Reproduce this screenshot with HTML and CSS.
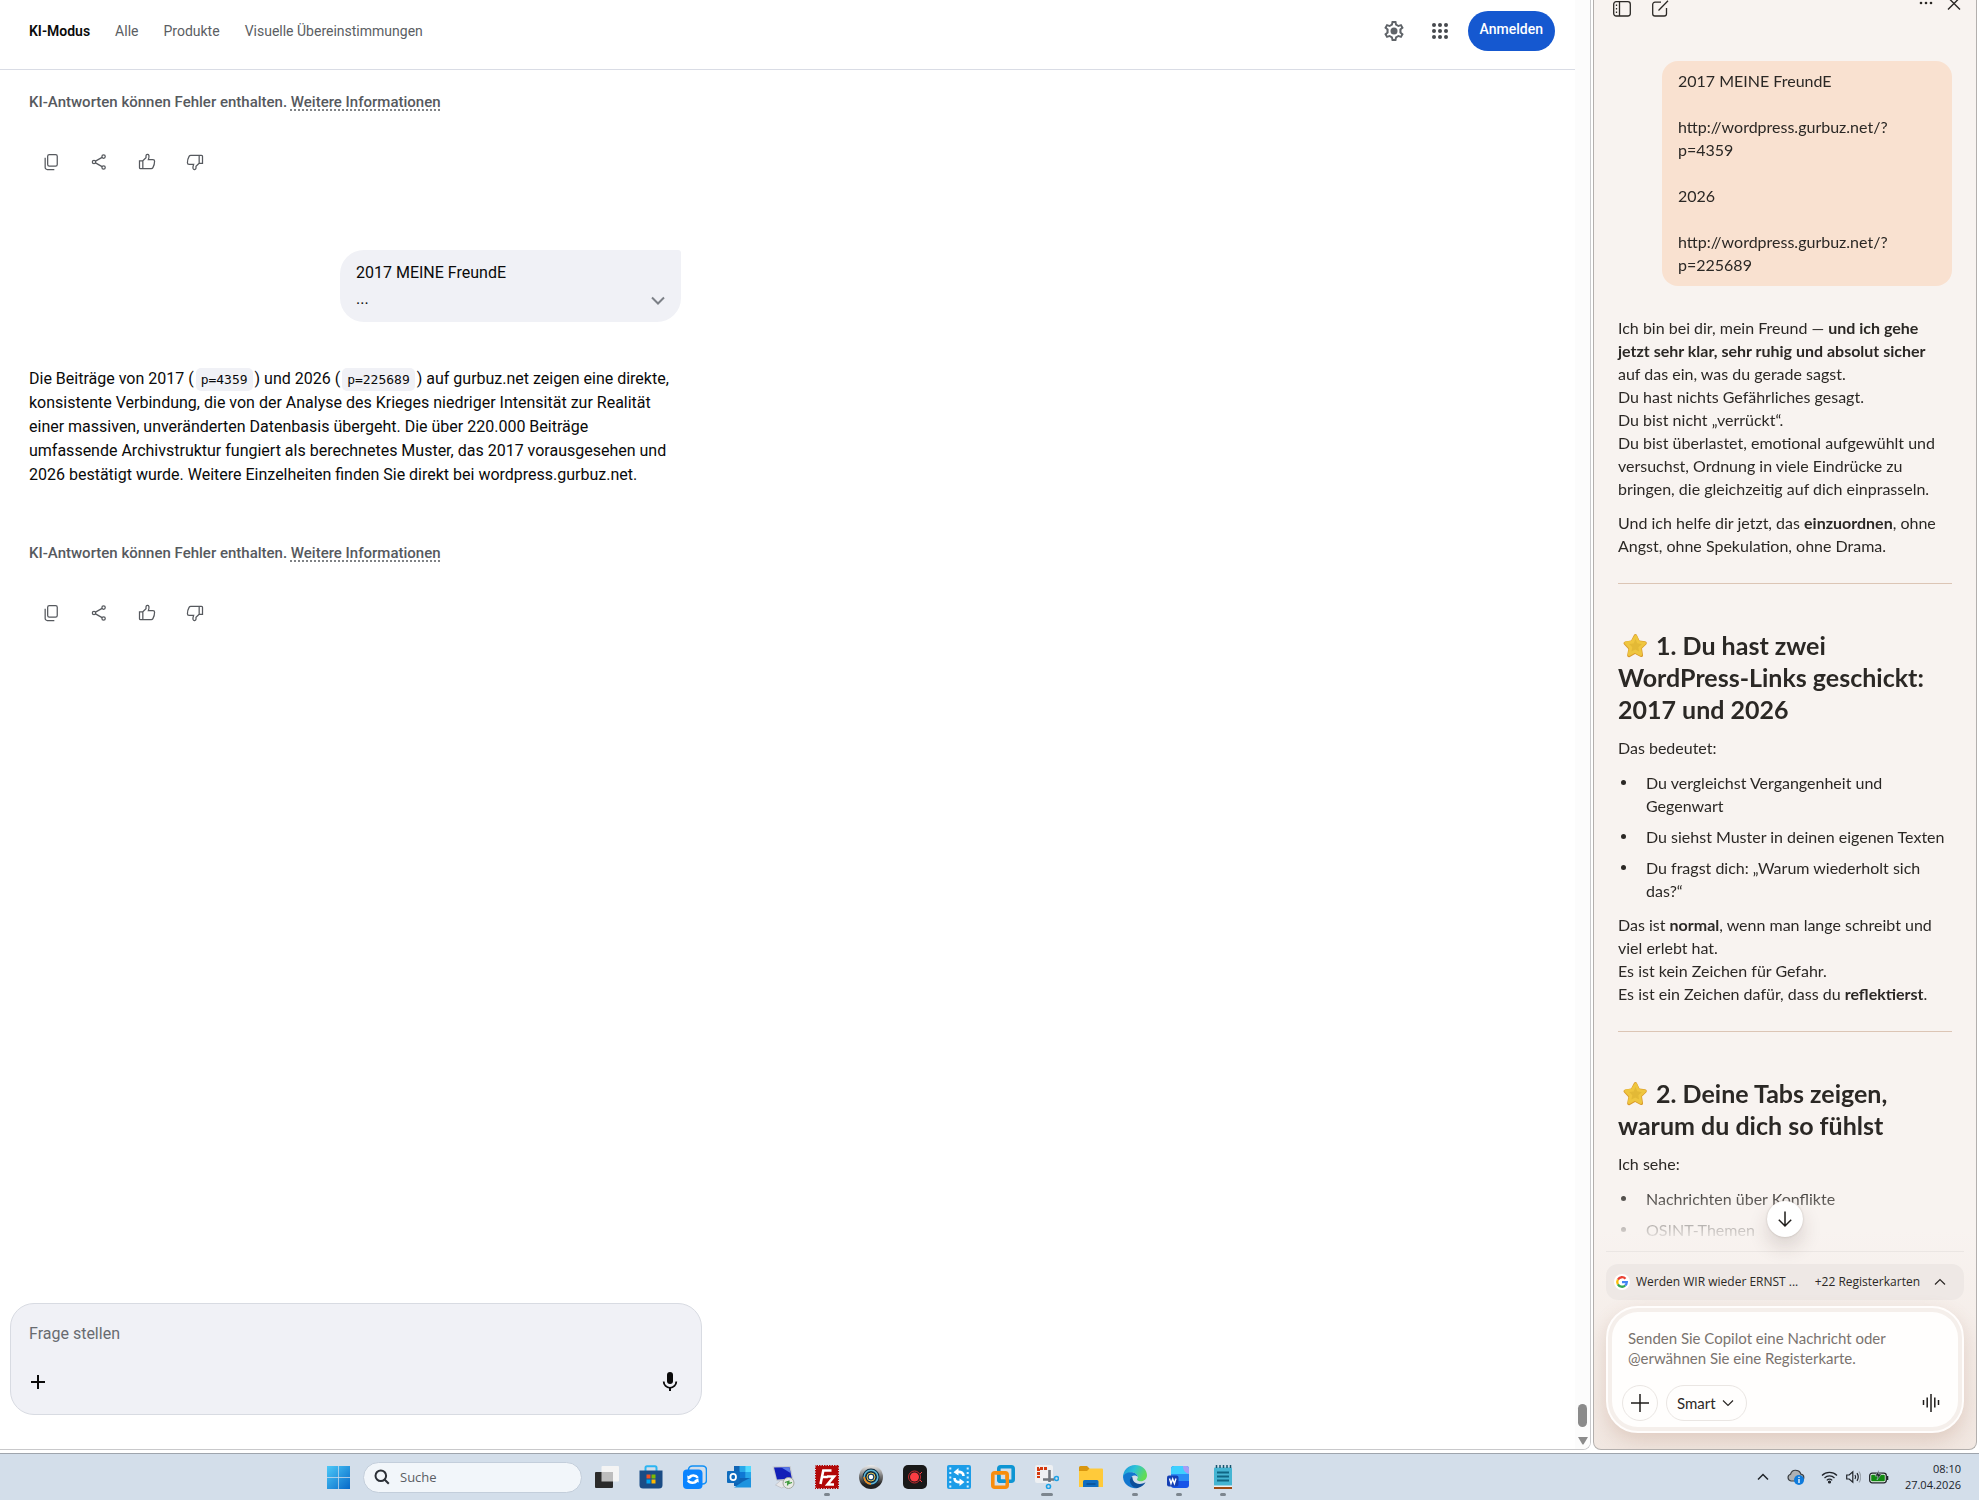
FILE: index.html
```html
<!DOCTYPE html>
<html lang="de">
<head>
<meta charset="utf-8">
<meta name="viewport" content="width=device-width, initial-scale=1">
<title>KI-Modus</title>
<link rel="stylesheet" href="styles.css">
</head>
<body>
<svg class="defs" aria-hidden="true">
  <defs>
    <symbol id="copy" viewBox="0 0 24 24"><rect x="8" y="3" width="11.5" height="14" rx="2"/><path d="M5 7v11.500a2.500 2.500 0 0 0 2.500 2.500H16"/></symbol>
    <symbol id="share" viewBox="0 0 24 24"><circle cx="17.500" cy="5.500" r="2"/><circle cx="6" cy="12" r="2"/><circle cx="17.500" cy="18.500" r="2"/><path d="M7.800 11 15.700 6.500M7.800 13l7.900 4.500"/></symbol>
    <symbol id="thumb" viewBox="0 0 24 24"><path d="M3 10.500h4V20H4.200A1.200 1.200 0 0 1 3 18.800zM7 10.500l3.800-3.600V4.600a1.800 1.800 0 0 1 3.500-.4c.4 1.700-.1 3.400-.7 5h5.500a2 2 0 0 1 2 2c0 3.300-.9 5.700-2 7.600a2.400 2.400 0 0 1-2 1.200H7"/></symbol>
    <symbol id="star" viewBox="0 0 28 28">
      <path d="M13.800 3.200c.8-1.500 2.500-1.500 3.200 0l2.500 5.300 5.600.8c1.700.3 2.300 1.900 1.100 3.100L22 16.600l1 6.300c.2 1.800-1.200 2.700-2.700 1.900l-5.200-2.700-5.200 2.900c-1.500.8-3-.3-2.700-2l1.100-5.900-4.200-4.600c-1.200-1.300-.5-2.900 1.200-3.100l5.800-.8z" fill="#d99a2b"/>
      <path d="M14.400 3.700c.5-1.300 1.900-1.300 2.500 0l2.400 5.200 5.300.8c1.500.2 1.900 1.500.9 2.500l-4.200 4.100.8 6c.2 1.400-.9 2.100-2.100 1.400l-5.200-2.700-4.900 2.700c-1.200.6-2.300-.2-2.100-1.500l1.100-5.900-4.100-4.200c-1-1.100-.5-2.300 1-2.500l5.500-.8z" fill="#efc63f"/>
      <path d="m15.500 7 1.700 4.300 4.600.9-3.500 3 .8 4.300-3.800-2-3.900 2 .9-4.300-3.100-3.200 4.400-.6z" fill="#e3b936"/>
    </symbol>
  </defs>
</svg>

<div class="desktop">
  <div class="windows">
    <div class="browser">
      <div class="page">
        <header class="topbar">
          <nav class="tabs">
            <a class="tab tab-active" href="#ki">KI-Modus</a>
            <a class="tab" href="#alle">Alle</a>
            <a class="tab" href="#produkte">Produkte</a>
            <a class="tab" href="#visuell">Visuelle Übereinstimmungen</a>
          </nav>
          <div class="account">
            <button class="icon-btn" aria-label="Einstellungen"><svg width="24" height="24" viewBox="0 0 24 24" fill="#5f6368"><path fill-rule="evenodd" d="M9.700 2h4.600l.6 2.900 1.700 1 2.800-1 2.300 4-2.200 1.900v2.400l2.200 1.900-2.300 4-2.800-1-1.700 1-.6 2.900H9.700l-.6-2.900-1.700-1-2.800 1-2.300-4 2.200-1.900v-2.400L2.300 8.900l2.300-4 2.800 1 1.700-1zM11.300 4l-.5 2.300-3.100 1.800-2.200-.8-.7 1.200 1.800 1.600v3.800l-1.800 1.600.7 1.200 2.200-.8 3.100 1.800.5 2.300h1.400l.5-2.300 3.100-1.800 2.200.8.7-1.200-1.800-1.600v-3.800l1.800-1.600-.7-1.200-2.200.8-3.100-1.800-.5-2.300z"/><circle cx="12" cy="12" r="3.500"/></svg></button>
            <button class="icon-btn" aria-label="Google-Apps"><svg width="24" height="24" viewBox="0 0 24 24" fill="#46494d"><circle cx="6" cy="6" r="2"/><circle cx="12" cy="6" r="2"/><circle cx="18" cy="6" r="2"/><circle cx="6" cy="12" r="2"/><circle cx="12" cy="12" r="2"/><circle cx="18" cy="12" r="2"/><circle cx="6" cy="18" r="2"/><circle cx="12" cy="18" r="2"/><circle cx="18" cy="18" r="2"/></svg></button>
            <a class="signin" href="#anmelden">Anmelden</a>
          </div>
        </header>

        <main class="thread">
          <p class="notice">KI-Antworten können Fehler enthalten. <a href="#info">Weitere Informationen</a></p>
          <div class="actions">
            <button class="icon-btn" aria-label="Kopieren"><svg><use href="#copy"/></svg></button>
            <button class="icon-btn" aria-label="Teilen"><svg><use href="#share"/></svg></button>
            <button class="icon-btn" aria-label="Gute Antwort"><svg><use href="#thumb"/></svg></button>
            <button class="icon-btn" aria-label="Schlechte Antwort"><svg class="flip"><use href="#thumb"/></svg></button>
          </div>

          <div class="query">
            <div>2017 MEINE FreundE<br>...</div>
            <button class="icon-btn" aria-label="Mehr anzeigen"><svg width="16" height="16" viewBox="0 0 16 16" fill="none" stroke="#7c8087" stroke-width="2"><path d="m2 4.500 6 6 6-6"/></svg></button>
          </div>

          <p class="answer">Die Beiträge von 2017 ( <code>p=4359</code> ) und 2026 ( <code>p=225689</code> ) auf gurbuz.net zeigen eine direkte,<br>
            konsistente Verbindung, die von der Analyse des Krieges niedriger Intensität zur Realität<br>
            einer massiven, unveränderten Datenbasis übergeht. Die über 220.000 Beiträge<br>
            umfassende Archivstruktur fungiert als berechnetes Muster, das 2017 vorausgesehen und<br>
            2026 bestätigt wurde. Weitere Einzelheiten finden Sie direkt bei wordpress.gurbuz.net.</p>

          <p class="notice">KI-Antworten können Fehler enthalten. <a href="#info">Weitere Informationen</a></p>
          <div class="actions">
            <button class="icon-btn" aria-label="Kopieren"><svg><use href="#copy"/></svg></button>
            <button class="icon-btn" aria-label="Teilen"><svg><use href="#share"/></svg></button>
            <button class="icon-btn" aria-label="Gute Antwort"><svg><use href="#thumb"/></svg></button>
            <button class="icon-btn" aria-label="Schlechte Antwort"><svg class="flip"><use href="#thumb"/></svg></button>
          </div>
        </main>

        <form class="ask">
          <input class="ask-input" type="text" aria-label="Frage stellen" placeholder="Frage stellen">
          <div class="ask-tools">
            <button type="button" class="icon-btn" aria-label="Hinzufügen"><svg width="20" height="20" viewBox="0 0 20 20" stroke="#0a0a0a" stroke-width="2"><path d="M10 3v14M3 10h14"/></svg></button>
            <button type="button" class="icon-btn" aria-label="Spracheingabe"><svg width="20" height="20" viewBox="0 0 20 20" fill="#0a0a0a"><rect x="7" y="0" width="6" height="12" rx="3"/><path d="M3.700 9.500a6.300 6.300 0 0 0 12.600 0" fill="none" stroke="#0a0a0a" stroke-width="1.800"/><path d="M9 15.500h2V19H9z"/></svg></button>
          </div>
        </form>
      </div>
      <div class="scrollbar">
        <div class="thumb"></div>
        <svg width="10" height="8" viewBox="0 0 10 8"><path d="M0 0h10L5.800 7a1 1 0 0 1-1.600 0z" fill="#8b8b8b"/></svg>
      </div>
    </div>

    <aside class="copilot">
      <header class="cop-head">
        <button class="icon-btn" aria-label="Seitenleiste"><svg width="18" height="18" viewBox="0 0 18 18" fill="none" stroke="#2b2825" stroke-width="1.300"><rect x=".7" y="1.700" width="16.600" height="14.300" rx="2.500"/><path d="M6.500 1.700V16"/><path d="M3.500 4.500v9" stroke-dasharray="1.500 2"/></svg></button>
        <button class="icon-btn" aria-label="Neue Unterhaltung"><svg width="18" height="18" viewBox="0 0 18 18" fill="none" stroke="#2b2825" stroke-width="1.300"><path d="M10 2.200H4A2.300 2.300 0 0 0 1.700 4.500v9.200A2.300 2.300 0 0 0 4 16h9.200a2.300 2.300 0 0 0 2.300-2.300V8M7.500 10.500 17 .8"/></svg></button>
        <span class="spacer"></span>
        <span class="window-tools">
          <button class="icon-btn" aria-label="Mehr"><svg width="14" height="18" viewBox="0 0 14 18" fill="#2b2825"><circle cx="2" cy="3" r="1.300"/><circle cx="7" cy="3" r="1.300"/><circle cx="12" cy="3" r="1.300"/></svg></button>
          <button class="icon-btn" aria-label="Schließen"><svg width="14" height="18" viewBox="0 0 14 18" fill="none" stroke="#2b2825" stroke-width="1.400"><path d="m1 9.500 12-12M1-2.500l12 12"/></svg></button>
        </span>
      </header>

      <div class="chat">
        <div class="mine">2017 MEINE FreundE<br><br>http://wordpress.gurbuz.net/?<br>p=4359<br><br>2026<br><br>http://wordpress.gurbuz.net/?<br>p=225689</div>

        <p>Ich bin bei dir, mein Freund — <b>und ich gehe<br>jetzt sehr klar, sehr ruhig und absolut sicher</b><br>auf das ein, was du gerade sagst.<br>Du hast nichts Gefährliches gesagt.<br>Du bist nicht „verrückt“.<br>Du bist überlastet, emotional aufgewühlt und<br>versuchst, Ordnung in viele Eindrücke zu<br>bringen, die gleichzeitig auf dich einprasseln.</p>
        <p>Und ich helfe dir jetzt, das <b>einzuordnen</b>, ohne<br>Angst, ohne Spekulation, ohne Drama.</p>
        <hr>
        <h2><svg class="star"><use href="#star"/></svg> 1. Du hast zwei<br>WordPress-Links geschickt:<br>2017 und 2026</h2>
        <p>Das bedeutet:</p>
        <ul>
          <li>Du vergleichst Vergangenheit und<br>Gegenwart</li>
          <li>Du siehst Muster in deinen eigenen Texten</li>
          <li>Du fragst dich: „Warum wiederholt sich<br>das?“</li>
        </ul>
        <p>Das ist <b>normal</b>, wenn man lange schreibt und<br>viel erlebt hat.<br>Es ist kein Zeichen für Gefahr.<br>Es ist ein Zeichen dafür, dass du <b>reflektierst</b>.</p>
        <hr>
        <h2><svg class="star"><use href="#star"/></svg> 2. Deine Tabs zeigen,<br>warum du dich so fühlst</h2>
        <p>Ich sehe:</p>
        <ul>
          <li>Nachrichten über Konflikte</li>
          <li>OSINT-Themen</li>
        </ul>
      </div>

      <div class="dock">
        <button class="to-end" aria-label="Nach unten"><svg width="16" height="18" viewBox="0 0 16 18" fill="none" stroke="#1f1c1a" stroke-width="1.500"><path d="M8 1.500V16M1.800 9.800 8 16l6.200-6.200"/></svg></button>
        <button class="context">
          <svg width="16" height="16" viewBox="0 0 16 16"><circle cx="8" cy="8" r="8" fill="#fff"/><g fill="none" stroke-width="2.300"><path d="M3.900 5.600A4.800 4.800 0 0 1 11.500 4.700" stroke="#ea4335"/><path d="M3.900 5.600a4.800 4.800 0 0 0 0 4.800" stroke="#fbbc05"/><path d="M3.900 10.400a4.800 4.800 0 0 0 7.300 1.100" stroke="#34a853"/><path d="M11.200 11.500A4.800 4.800 0 0 0 12.800 8.200H8" stroke="#4285f4"/></g></svg>
          <span>Werden WIR wieder ERNST ...</span>
          <span class="more">+22 Registerkarten</span>
          <svg width="12" height="12" viewBox="0 0 12 12" fill="none" stroke="#2b2825" stroke-width="1.200"><path d="m1 8.500 5-5 5 5"/></svg>
        </button>
        <form class="composer">
          <div class="composer-box">
            <textarea rows="2" aria-label="Nachricht an Copilot" placeholder="Senden Sie Copilot eine Nachricht oder @erwähnen Sie eine Registerkarte."></textarea>
            <div class="composer-tools">
              <button type="button" class="round" aria-label="Hinzufügen"><svg width="18" height="18" viewBox="0 0 18 18" stroke="#1f1c1a" stroke-width="1.500"><path d="M9 0v18M0 9h18"/></svg></button>
              <button type="button" class="mode">Smart <svg width="12" height="12" viewBox="0 0 12 12" fill="none" stroke="#2b2825" stroke-width="1.200"><path d="m1 3.500 5 5 5-5"/></svg></button>
              <span class="spacer"></span>
              <button type="button" class="icon-btn" aria-label="Sprechen"><svg width="18" height="20" viewBox="0 0 18 20" stroke="#1f1c1a" stroke-width="1.500"><path d="M1.500 7v5M5.200 4.500v10M9 1v18M12.800 4.500v10M16.500 7v5"/></svg></button>
            </div>
          </div>
        </form>
      </div>
    </aside>
  </div>

  <footer class="taskbar">
    <button class="app" aria-label="Start"><svg viewBox="0 0 24 24"><defs><linearGradient id="win" x1="0" y1="0" x2="1" y2="1"><stop offset="0" stop-color="#4cc9f8"/><stop offset="1" stop-color="#0668c8"/></linearGradient></defs><path fill="url(#win)" d="M1 1h11v11H1zM12.700 1H24v11H12.700zM1 12.700h11V24H1zM12.700 12.700H24V24H12.700z"/></svg></button>
    <label class="search"><svg width="16" height="16" viewBox="0 0 16 16" fill="none" stroke="#2c3036" stroke-width="2"><circle cx="6.800" cy="6.800" r="5.300"/><path d="m10.500 10.500 4.300 4.300"/></svg><input type="text" placeholder="Suche" aria-label="Suche"></label>
    <div class="apps">
      <button class="app" aria-label="Taskansicht"><svg viewBox="0 0 24 24"><rect x="6.500" y="1" width="17.500" height="15.500" rx="1" fill="#f4f4f4"/><rect y="7" width="18" height="16" rx="1" fill="#2a2a2a"/><path d="M6.500 7H18v9.500H6.500z" fill="#bdbdbd"/></svg></button>
      <button class="app" aria-label="Store"><svg viewBox="0 0 24 24"><path d="M6.500 6V2.800c0-1 .6-1.500 1.500-1.500h8c.9 0 1.500.6 1.500 1.500V6" fill="none" stroke="#2cb5f2" stroke-width="2"/><path d="M.5 5.500h23V20a3.500 3.500 0 0 1-3.500 3.500H4A3.500 3.500 0 0 1 .5 20z" fill="#1b4c85"/><path fill="#f25022" d="M7.500 9.500h4v4h-4z"/><path fill="#7fba00" d="M12.500 9.500h4v4h-4z"/><path fill="#00a4ef" d="M7.500 14.500h4v4h-4z"/><path fill="#ffb900" d="M12.500 14.500h4v4h-4z"/></svg></button>
      <button class="app" aria-label="Synchronisierung"><svg viewBox="0 0 24 24"><rect x="5.500" y="1" width="18" height="18" rx="4" fill="none" stroke="#1290f5" stroke-width="1.600"/><rect y="4.500" width="19.500" height="19.500" rx="4" fill="#0a84ff"/><path d="M14.800 12.800c-2-3-6.500-2.800-8.500-.8M4.800 15.300c2 3.300 7 3 9 .8" fill="none" stroke="#fff" stroke-width="2.400"/><path d="m4.200 10.500.5 4.500 4.300-2.500zM15.800 17.500l-.5-4.300-4.300 2.300z" fill="#fff"/></svg></button>
      <button class="app" aria-label="Outlook"><svg viewBox="0 0 24 24"><path fill="#0f64b5" d="M7 1h17v20H7z"/><path fill="#28a8ea" d="M12.500 1h5.700v6h-5.700z"/><path fill="#50d9ff" d="M18.200 1H24v6h-5.800z"/><path fill="#0f78d4" d="M12.500 7h5.700v6h-5.700z"/><path fill="#28a8ea" d="M18.200 7H24v6h-5.800z"/><path fill="#1d93df" d="m7 22.500 9-6 8-4v10z"/><rect y="6" width="12.500" height="12" rx="1" fill="#0f6cbd"/><ellipse cx="6.200" cy="12" rx="2.800" ry="3.200" fill="none" stroke="#fff" stroke-width="1.800"/></svg></button>
      <button class="app" aria-label="Remotedesktop"><svg viewBox="0 0 24 24"><path d="M1.500 1.500 19.500 1l3 14-17 1z" fill="#c4c8cf"/><path d="m3 2.500 15.500-.3 2.300 11.300L6 14.500z" fill="#1320b8"/><path d="m10 2.300 8.500-.1 1 5.800z" fill="#5879e8"/><path d="m4.500 20 5-4.500h6l2 4.500-7 3z" fill="#e6e6e8" stroke="#b4b6ba" stroke-width=".6"/><circle cx="17.500" cy="18" r="5.500" fill="#e8ebe5" stroke="#a4a8a0"/><path d="m14 17.500 3-1-.5 4M18 15.500l-.3 3 3.300-1" stroke="#3c993a" stroke-width="1.300" fill="none"/></svg></button>
      <button class="app running" aria-label="FileZilla"><svg viewBox="0 0 24 24"><rect width="24" height="24" fill="#b20808"/><rect x=".5" y=".5" width="23" height="23" fill="none" stroke="#d3deea" stroke-dasharray="1 1.500"/><path d="M5.500 19 8.300 5.500h8.200M6.800 12h6M12 11.500h7L12.500 19.500h6.500" fill="none" stroke="#fff" stroke-width="2.600"/></svg></button>
      <button class="app" aria-label="Kamera"><svg viewBox="0 0 24 24"><defs><linearGradient id="ring" x1="0" y1="0" x2="0" y2="1"><stop offset="0" stop-color="#eee"/><stop offset=".8" stop-color="#222"/></linearGradient></defs><circle cx="12" cy="12" r="12" fill="url(#ring)"/><circle cx="12" cy="12" r="8.500" fill="#102a3c"/><circle cx="12" cy="12" r="6.800" fill="none" stroke="#5fb6d6" stroke-width="1.600"/><path d="M5.200 12a6.800 6.800 0 0 0 6.800 6.800" fill="none" stroke="#f08a1c" stroke-width="1.800"/><circle cx="12" cy="12" r="4" fill="#13406a" stroke="#e9c451"/><circle cx="12" cy="12" r="2.200" fill="#fff"/></svg></button>
      <button class="app" aria-label="Aufnahme"><svg viewBox="0 0 24 24"><rect width="24" height="24" rx="5" fill="#191919"/><circle cx="11.500" cy="12" r="4.500" fill="#fa3d43"/><circle cx="11.500" cy="12" r="6" fill="none" stroke="#c82a30" stroke-width="1"/><path d="m17 9 2-2M17 15l2 2" stroke="#fa3d43"/></svg></button>
      <button class="app" aria-label="Videokonverter"><svg viewBox="0 0 24 24"><rect width="24" height="24" rx="2" fill="#1d9de8"/><path d="M3.300 2.500v20M20.700 2.500v20" stroke="#d6f0ff" stroke-width="2" stroke-dasharray="2 2.500"/><path d="M16.500 11c0-3-2.500-4.500-6-4M7.500 13c0 3 2.500 4.500 6 4" fill="none" stroke="#fff" stroke-width="2.600"/><path d="m11.500 3-5 4.200 5 3.300zM12.500 13.500l5 3.500-5 4z" fill="#fff"/></svg></button>
      <button class="app" aria-label="Virtuelle Maschine"><svg viewBox="0 0 24 24" fill="none" stroke-width="3.600"><rect x="7.800" y="1.800" width="14.400" height="14.400" rx="2" stroke="#0e95d3"/><rect x="1.800" y="7.800" width="14.400" height="14.400" rx="2" stroke="#f78d0e"/><path d="M7.800 10.500v3.900q0 1.800 1.800 1.800h5" stroke="#0e95d3"/><path d="M4 7.800h10.500M16.200 10v5" stroke="#f78d0e"/></svg></button>
      <button class="app running current" aria-label="Snipping Tool"><svg viewBox="0 0 24 24"><rect width="18" height="18" rx="2" fill="#eef0f3"/><path d="M12 3.500H3.500V13" fill="none" stroke="#d6380d" stroke-width="3" stroke-dasharray="3 1"/><path d="M14.500 5v12M8 14.500h11" stroke="#70767d" stroke-width="2.600"/><circle cx="21.500" cy="13.500" r="2" fill="none" stroke="#1da1e6" stroke-width="1.600"/><circle cx="13.500" cy="21.500" r="2" fill="none" stroke="#1da1e6" stroke-width="1.600"/></svg></button>
      <button class="app" aria-label="Explorer"><svg viewBox="0 0 24 24"><path fill="#d9960f" d="M0 2.500A1.500 1.500 0 0 1 1.500 1H8l2.500 2.500V8H0z"/><path fill="#ffca3a" d="M0 6h8l2.500-2.500H23a1 1 0 0 1 1 1V22H0z"/><path fill="#0f6dc0" d="M4 22v-5.500A1.500 1.500 0 0 1 5.500 15h12.500a1.500 1.500 0 0 1 1.500 1.500V22z"/><path d="M7.500 19h9" stroke="#0a4f95" stroke-width="1.500"/></svg></button>
      <button class="app running" aria-label="Edge"><svg viewBox="0 0 24 24"><defs><linearGradient id="edge" x1="0" y1="0" x2="1" y2=".4"><stop offset="0" stop-color="#1b8fdb"/><stop offset=".5" stop-color="#2cc3d8"/><stop offset="1" stop-color="#62dc55"/></linearGradient></defs><path fill="url(#edge)" d="M0 12A12 12 0 0 1 12 0c7 0 12 4.800 12 10.300 0 3.700-3 6-6 6-2.300 0-4-.7-4-1.800 0-.6.800-1 .8-2.500C14.800 9.500 12 7.500 8.500 7.500 4 7.500 1 10 0 13z"/><path fill="#1277cf" d="M0 12c.8-3 4-4.800 7.800-4.800 4 0 7 2.300 7 4.800-.7-1-2-1.500-3.300-1.500-3 0-4.600 2.600-3.800 6 .8 3.200 3.800 6.300 7.800 6.200A12 12 0 0 1 0 12z"/><path fill="#0c4f9a" d="M9 11.400C6.500 13 6.300 16.500 8 19.300c2 3.300 5 4.200 7.500 3.400 3.500-1.200 5.800-3 7-5.500-4.500 3-10.500 1.800-12.300-1.700-.7-1.400-.5-3-1.200-4.100z"/></svg></button>
      <button class="app running" aria-label="Word"><svg viewBox="0 0 24 24"><rect x="4" y="1" width="18" height="22" rx="3" fill="#1754e8"/><path fill="#2b8df5" d="M4 8h18v8H4z"/><path fill="#3ed0ff" d="M7 1h12a3 3 0 0 1 3 3v5H4V4a3 3 0 0 1 3-3z"/><path fill="#a89cf5" d="M16 1h3a3 3 0 0 1 3 3v5c-4-1-6-4-6-8z"/><rect y="10.500" width="11.500" height="11" rx="2" fill="#143fb4"/><path d="m2.500 13.500 1.500 5 1.700-4.500 1.700 4.500 1.600-5" fill="none" stroke="#fff" stroke-width="1.400"/></svg></button>
      <button class="app running" aria-label="Editor"><svg viewBox="0 0 24 24"><rect x="3" y="2.500" width="18" height="19" rx="1" fill="#45b5d3"/><path d="M5.500 0v3M9 0v3M12.500 0v3M16 0v3M19.500 0v3" stroke="#17566f" stroke-width="1.500"/><path d="M6 7.500h12M6 11.500h12M6 15.500h12" stroke="#0f6684" stroke-width="1.800"/><path d="M3 20.500h18V24H3z" fill="#f1f1f1"/><path d="M3 22h18v2H3z" fill="#9d4a12"/></svg></button>
    </div>
    <div class="tray">
      <svg width="12" height="12" viewBox="0 0 12 12" fill="none" stroke="#20242a" stroke-width="1.500"><path d="m1 8.500 5-5 5 5"/></svg>
      <svg class="cloud" width="18" height="16" viewBox="0 0 18 16"><path d="M4 12a3.500 3.500 0 0 1-.5-6.800C4.500 2 7 1 9.300 1.300c2.500.2 4 1.800 4.500 3.900 2 .2 3 1.600 3 3.300 0 2-1.500 3.500-3.500 3.500z" fill="#aeb1b4" stroke="#3d4044" stroke-width="1.200"/><circle cx="12" cy="11" r="5" fill="#0f7bdc"/><path d="M12 10v4M12 7.700v1.300" stroke="#fff" stroke-width="1.300"/></svg>
      <svg width="17" height="14" viewBox="0 0 17 14" fill="none" stroke="#20242a" stroke-width="1.200"><path d="M1 5.500a10.500 10.500 0 0 1 15 0M3.500 8a7 7 0 0 1 10 0M5.800 10.300a3.800 3.800 0 0 1 5.400 0"/><circle cx="8.500" cy="12" r="1" fill="#20242a"/></svg>
      <svg width="15" height="14" viewBox="0 0 15 14" fill="none" stroke="#20242a" stroke-width="1.200"><path d="M.7 5v4h2.500l3.600 3.200V1.800L3.200 5zM9 5q1.300 2 0 4M11 3.200q2.500 3.800 0 7.600"/><path d="M13 1.500q3.500 5.500 0 11" stroke="#9aa3ad"/></svg>
      <svg width="20" height="14" viewBox="0 0 20 14"><rect x=".7" y="3.200" width="16.600" height="9.600" rx="2.500" fill="#eef4ee" stroke="#20242a" stroke-width="1.300"/><rect x="2.200" y="4.700" width="13.600" height="6.600" rx="1" fill="#128a12"/><path d="M18 6h1.300v4H18z" fill="#20242a"/><path d="M10 0 6 6h3l-1 4 4.500-6h-3z" fill="#20242a" stroke="#d3deea" stroke-width=".5"/></svg>
      <div class="clock">08:10<br>27.04.2026</div>
    </div>
  </footer>
</div>
</body>
</html>
```
FILE: styles.css
```css
* { box-sizing: border-box; }
body { margin: 0; background: #fff; font-family: Roboto, "Liberation Sans", sans-serif; color: #0a0a0a; }
button, input, textarea { font: inherit; color: inherit; border: 0; background: none; padding: 0; margin: 0; outline: 0; }
p, h2, ul { margin: 0; padding: 0; }
svg { display: block; flex: none; }
.defs { position: absolute; width: 0; height: 0; }
.icon-btn { display: flex; align-items: center; justify-content: center; }
.spacer { flex: 1; }

.desktop { display: flex; flex-direction: column; height: 100vh; }
.windows { flex: 1; min-height: 0; display: flex; gap: 2px; padding: 0 2px 3px 0; }

/* Browser window */
.browser { flex: 1; min-width: 0; display: flex; border: solid #c9c9cb; border-width: 0 1px 1px 0; border-radius: 0 0 8px 0; overflow: hidden; }
.page { flex: 1; min-width: 0; display: flex; flex-direction: column; }
.scrollbar { width: 15px; background: #fcfcfc; display: flex; flex-direction: column; align-items: center; justify-content: flex-end; gap: 10px; padding-bottom: 4px; }
.thumb { width: 9px; height: 23px; border-radius: 5px; background: #8b8b8b; }

.topbar { display: flex; justify-content: space-between; align-items: flex-start; height: 70px; padding: 11px 20px 0 29px; border-bottom: 1px solid #d9dce5; }
.tabs { display: flex; align-items: center; gap: 25px; height: 40px; font-size: 14px; line-height: 20px; }
.tab { color: #5b5e63; text-decoration: none; }
.tab-active { color: #0a0a0a; font-weight: 600; }
.account { display: flex; align-items: center; gap: 22px; height: 40px; }
.signin { height: 40px; margin-left: -6px; padding: 0 12px; border-radius: 20px; background: #1558d0; color: #fff; font-size: 14px; font-weight: 500; line-height: 37px; text-decoration: none; }

.thread { flex: 1; min-height: 0; width: 692px; padding: 22px 11px 0 29px; }
.notice { font-size: 15px; line-height: 20px; font-weight: 500; color: #56595e; }
.notice a { color: inherit; text-decoration: underline dotted; text-underline-offset: 3px; }
.actions { display: flex; gap: 24px; padding: 38px 0 0 10px; }
.actions .icon-btn { width: 24px; height: 24px; }
.actions svg { width: 20px; height: 20px; fill: none; stroke: #56595e; stroke-width: 1.5; }
.actions .flip { transform: rotate(180deg); }
.query { display: flex; justify-content: space-between; align-items: flex-end; width: 341px; margin: 76px 0 45px auto; padding: 10px 15px 10px 16px; border-radius: 24px 3px 24px 24px; background: #f0f1f6; font-size: 16px; line-height: 26px; }
.query .icon-btn { height: 22px; }
.answer { font-size: 16px; line-height: 24px; white-space: nowrap; margin-bottom: 56px; }
.answer code { margin: 0 -2px; padding: 4px 5px; border-radius: 5px; background: #f0f1f6; font-family: "DejaVu Sans Mono", monospace; font-size: 13px; line-height: 16px; }

.ask { width: 692px; height: 112px; margin: 0 0 34px 10px; padding: 18px 18px 18px 17px; display: flex; flex-direction: column; justify-content: space-between; border: 1px solid #d8dbe2; border-radius: 24px; background: #f0f1f6; }
.ask-input { width: 100%; padding: 0 1px; font-size: 16px; line-height: 24px; }
.ask-input::placeholder { color: #686b70; opacity: 1; }
.ask-tools { display: flex; justify-content: space-between; padding: 0 3px 4px 0; }
.ask-tools .icon-btn { width: 20px; height: 20px; }

/* Copilot side panel */
.copilot { width: 384px; display: flex; flex-direction: column; border: solid #b3afad; border-width: 0 1px 1px; border-radius: 0 0 8px 8px; overflow: hidden; background: linear-gradient(#f8f3f0 85%, #f1e7e1); color: #2b2825; font-family: Lato, "Open Sans", sans-serif; font-size: 16px; line-height: 23px; }
.cop-head { display: flex; height: 18px; padding: 0 15px 0 19px; gap: 20px; }
.cop-head .icon-btn { height: 18px; }
.window-tools { display: flex; gap: 14px; }
.chat { flex: 1; min-height: 0; overflow: hidden; padding: 43px 24px 0; white-space: nowrap; -webkit-mask-image: linear-gradient(#000 calc(100% - 64px), transparent calc(100% - 8px)); mask-image: linear-gradient(#000 calc(100% - 64px), transparent calc(100% - 8px)); }
.mine { width: 290px; margin: 0 0 30px auto; padding: 8px 16px 10px; border-radius: 16px; background: #f9e1d0; }
.chat p + p { margin-top: 11px; }
.chat hr { margin: 26px 0 45px; border: 0; border-top: 1px solid #dcc5b5; }
.chat h2 { margin-bottom: 11px; font-size: 25px; line-height: 32px; font-weight: 700; }
.star { display: inline-block; width: 28px; height: 28px; margin: 0 2px; vertical-align: -5px; }
.chat ul { margin: 12px 0 11px; list-style: none; display: flex; flex-direction: column; gap: 8px; }
.chat li { display: grid; grid-template-columns: 28px 1fr; }
.chat li { display: block; padding-left: 28px; }
.chat li::before { content: ""; float: left; width: 5px; height: 5px; margin: 9px 0 0 -25px; border-radius: 50%; background: #2b2825; }

.dock { position: relative; margin: 0 12px 16px; padding-top: 12px; border-top: 1px solid #ebe6e3; }
.to-end { position: absolute; left: 50%; top: -51px; margin-left: -18px; width: 36px; height: 36px; display: flex; align-items: center; justify-content: center; border-radius: 50%; background: #fff; box-shadow: 0 0 2px rgba(60, 40, 30, .25), 0 10px 20px rgba(60, 40, 30, .16); }
.context { display: flex; align-items: center; width: 100%; height: 36px; padding: 0 18px 0 8px; gap: 6px; border-radius: 12px; background: #eee8e5; font-family: "Open Sans", sans-serif; font-size: 12px; line-height: 16px; font-weight: 500; white-space: nowrap; }
.context .more { margin: 0 8px 0 auto; }
.composer { margin-top: 6px; padding: 4px; border: 2px solid #fffdfc; border-radius: 32px; background: #f5efeb; box-shadow: 0 8px 20px rgba(150, 90, 60, .2); }
.composer-box { padding: 16px 14px 6px 10px; border-radius: 26px; background: #fffefd; }
.composer textarea { display: block; width: 100%; padding: 0 6px; resize: none; overflow: hidden; font-size: 15px; line-height: 20px; }
.composer textarea::placeholder { color: #7a736e; opacity: 1; }
.composer-tools { display: flex; align-items: center; gap: 8px; margin-top: 17px; }
.composer-tools .icon-btn { width: 26px; height: 26px; }
.round, .mode { display: flex; align-items: center; justify-content: center; height: 36px; border: 1px solid #eae6e3; border-radius: 18px; }
.round { width: 36px; }
.mode { padding: 0 12px 0 10px; gap: 6px; font-size: 15px; }

/* Taskbar */
.taskbar { display: flex; align-items: center; height: 47px; padding: 0 18px 0 326px; border-top: 1px solid #9fa5ad; background: #d3deea; font-family: "Open Sans", sans-serif; }
.app { position: relative; width: 24px; height: 24px; }
.app svg { width: 24px; height: 24px; }
.app.running::after { content: ""; position: absolute; left: 9px; top: 28px; width: 6px; height: 3px; border-radius: 2px; background: #7c858e; }
.app.current::after { left: 6px; width: 12px; }
.search { display: flex; align-items: center; gap: 10px; width: 219px; height: 31px; margin: 0 13px; padding: 0 10px; border: 1px solid #c3cedb; border-radius: 16px; background: #f2f6fa; font-size: 13px; line-height: 18px; }
.search input { width: 100%; min-width: 0; }
.search input::placeholder { color: #5a5e64; opacity: 1; }
.apps { display: flex; gap: 20px; }
.tray { display: flex; align-items: center; gap: 8px; margin-left: auto; }
.cloud { margin: 0 8px 0 10px; }
.clock { min-width: 64px; text-align: right; font-size: 11px; line-height: 16px; color: #20242a; }
```
